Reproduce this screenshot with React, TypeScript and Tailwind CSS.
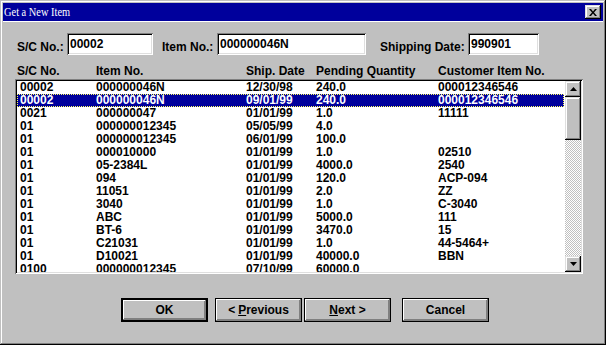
import React from "react";

const rows: string[][] = [
  ["00002", "000000046N", "12/30/98", "240.0", "000012346546"],
  ["00002", "000000046N", "09/01/99", "240.0", "000012346546"],
  ["0021", "000000047", "01/01/99", "1.0", "11111"],
  ["01", "000000012345", "05/05/99", "4.0", ""],
  ["01", "000000012345", "06/01/99", "100.0", ""],
  ["01", "000010000", "01/01/99", "1.0", "02510"],
  ["01", "05-2384L", "01/01/99", "4000.0", "2540"],
  ["01", "094", "01/01/99", "120.0", "ACP-094"],
  ["01", "11051", "01/01/99", "2.0", "ZZ"],
  ["01", "3040", "01/01/99", "1.0", "C-3040"],
  ["01", "ABC", "01/01/99", "5000.0", "111"],
  ["01", "BT-6", "01/01/99", "3470.0", "15"],
  ["01", "C21031", "01/01/99", "1.0", "44-5464+"],
  ["01", "D10021", "01/01/99", "40000.0", "BBN"],
  ["0100", "000000012345", "07/10/99", "60000.0", ""],
];

const raised =
  "bg-[#c0c0c0] shadow-[inset_-1px_-1px_#000,inset_1px_1px_#dfdfdf,inset_-2px_-2px_#808080,inset_2px_2px_#fff]";
const sunken =
  "bg-white shadow-[inset_1px_1px_#808080,inset_-1px_-1px_#fff,inset_2px_2px_#000,inset_-2px_-2px_#dfdfdf]";

function Field({ value, w }: { value: string; w: string }) {
  return (
    <div className={`${sunken} ${w} h-[22px] flex items-center pl-[3px] leading-[13px]`}>
      {value}
    </div>
  );
}

function Btn({ children, def }: { children: React.ReactNode; def?: boolean }) {
  return (
    <div
      className={`w-[87px] h-[24px] border-black ${def ? "border-2" : "border"} bg-[#c0c0c0] flex`}
    >
      <div className="flex-1 flex items-center justify-center shadow-[inset_-1px_-1px_#808080,inset_1px_1px_#fff,inset_-2px_-2px_#808080]">
        {children}
      </div>
    </div>
  );
}

export default function App() {
  return (
    <div className="w-[606px] h-[345px] bg-[#c0c0c0] shadow-[inset_-1px_-1px_#000,inset_1px_1px_#c0c0c0,inset_-2px_-2px_#808080,inset_2px_2px_#fff] p-[3px] flex flex-col font-['Liberation_Sans',Arial,sans-serif] font-bold text-[12px] text-black">
      {/* title bar */}
      <div className="h-[18px] bg-[#00009c] flex items-center justify-between pl-[1px] pr-[2px]">
        <span className="inline-block origin-left scale-x-[0.8] font-['Liberation_Serif','Times_New_Roman',serif] font-normal text-white text-[13px] leading-[14px] whitespace-nowrap">
          Get a New Item
        </span>
        <div className={`${raised} w-[16px] h-[14px] flex items-center justify-center`}>
          <svg width="8" height="7" viewBox="0 0 8 7">
            <path d="M0 0h2l2 2.5L6 0h2L5 3.5 8 7H6L4 4.5 2 7H0l3-3.5z" fill="#000" />
          </svg>
        </div>
      </div>
      <div className="h-px bg-white" />

      {/* body */}
      <div className="flex flex-col pl-[12px]">
        {/* inputs */}
        <div className="flex items-start mt-[11px] pl-[2px]">
          <span className="w-[50px] mt-[8px] leading-[13px]">S/C No.:</span>
          <Field value="00002" w="w-[86px]" />
          <span className="ml-[9px] w-[55px] mt-[8px] leading-[13px]">Item No.:</span>
          <Field value="000000046N" w="w-[149px]" />
          <span className="ml-[14px] w-[88px] mt-[8px] leading-[13px]">Shipping Date:</span>
          <Field value="990901" w="w-[71px]" />
        </div>

        {/* header */}
        <div className="grid grid-cols-[79px_150px_70px_122px_1fr] h-[13px] leading-[13px] mt-[10px] pl-[2px]">
          <span>S/C No.</span>
          <span>Item No.</span>
          <span>Ship. Date</span>
          <span>Pending Quantity</span>
          <span>Customer Item No.</span>
        </div>

        {/* list box */}
        <div className={`${sunken} mt-[1px] w-[568px] h-[195px] p-[2px] flex`}>
          <div className="flex-1 overflow-hidden">
            {rows.map((r, i) => {
              const sel = i === 1;
              return (
                <div
                  key={i}
                  className={`grid grid-cols-[79px_150px_70px_122px_1fr] h-[13px] leading-[13px] w-[547px] whitespace-nowrap ${
                    sel
                      ? "bg-[#00009c] text-white outline outline-1 outline-dotted outline-[#ffff60] -outline-offset-1"
                      : ""
                  }`}
                >
                  <span className="pl-[3px]">{r[0]}</span>
                  <span>{r[1]}</span>
                  <span>{r[2]}</span>
                  <span>{r[3]}</span>
                  <span>{r[4]}</span>
                </div>
              );
            })}
          </div>
          {/* scrollbar */}
          <div className="w-[16px] flex flex-col">
            <div className={`${raised} h-[16px] flex items-center justify-center`}>
              <svg width="7" height="4" viewBox="0 0 7 4">
                <path d="M3.5 0L7 4H0z" fill="#000" />
              </svg>
            </div>
            <div className={`${raised} h-[43px]`} />
            <div className="flex-1 bg-[repeating-conic-gradient(#c0c0c0_0_25%,#fff_0_50%)] bg-[length:2px_2px]" />
            <div className={`${raised} h-[16px] flex items-center justify-center`}>
              <svg width="7" height="4" viewBox="0 0 7 4">
                <path d="M0 0h7L3.5 4z" fill="#000" />
              </svg>
            </div>
          </div>
        </div>

        {/* buttons */}
        <div className="flex mt-[24px] ml-[106px]">
          <Btn def>OK</Btn>
          <div className="ml-[7px]">
            <Btn>
              &lt; <span className="underline ml-[3px]">P</span>revious
            </Btn>
          </div>
          <div className="ml-[2px]">
            <Btn>
              <span className="underline">N</span>ext &gt;
            </Btn>
          </div>
          <div className="ml-[11px]">
            <Btn>Cancel</Btn>
          </div>
        </div>
      </div>
    </div>
  );
}
